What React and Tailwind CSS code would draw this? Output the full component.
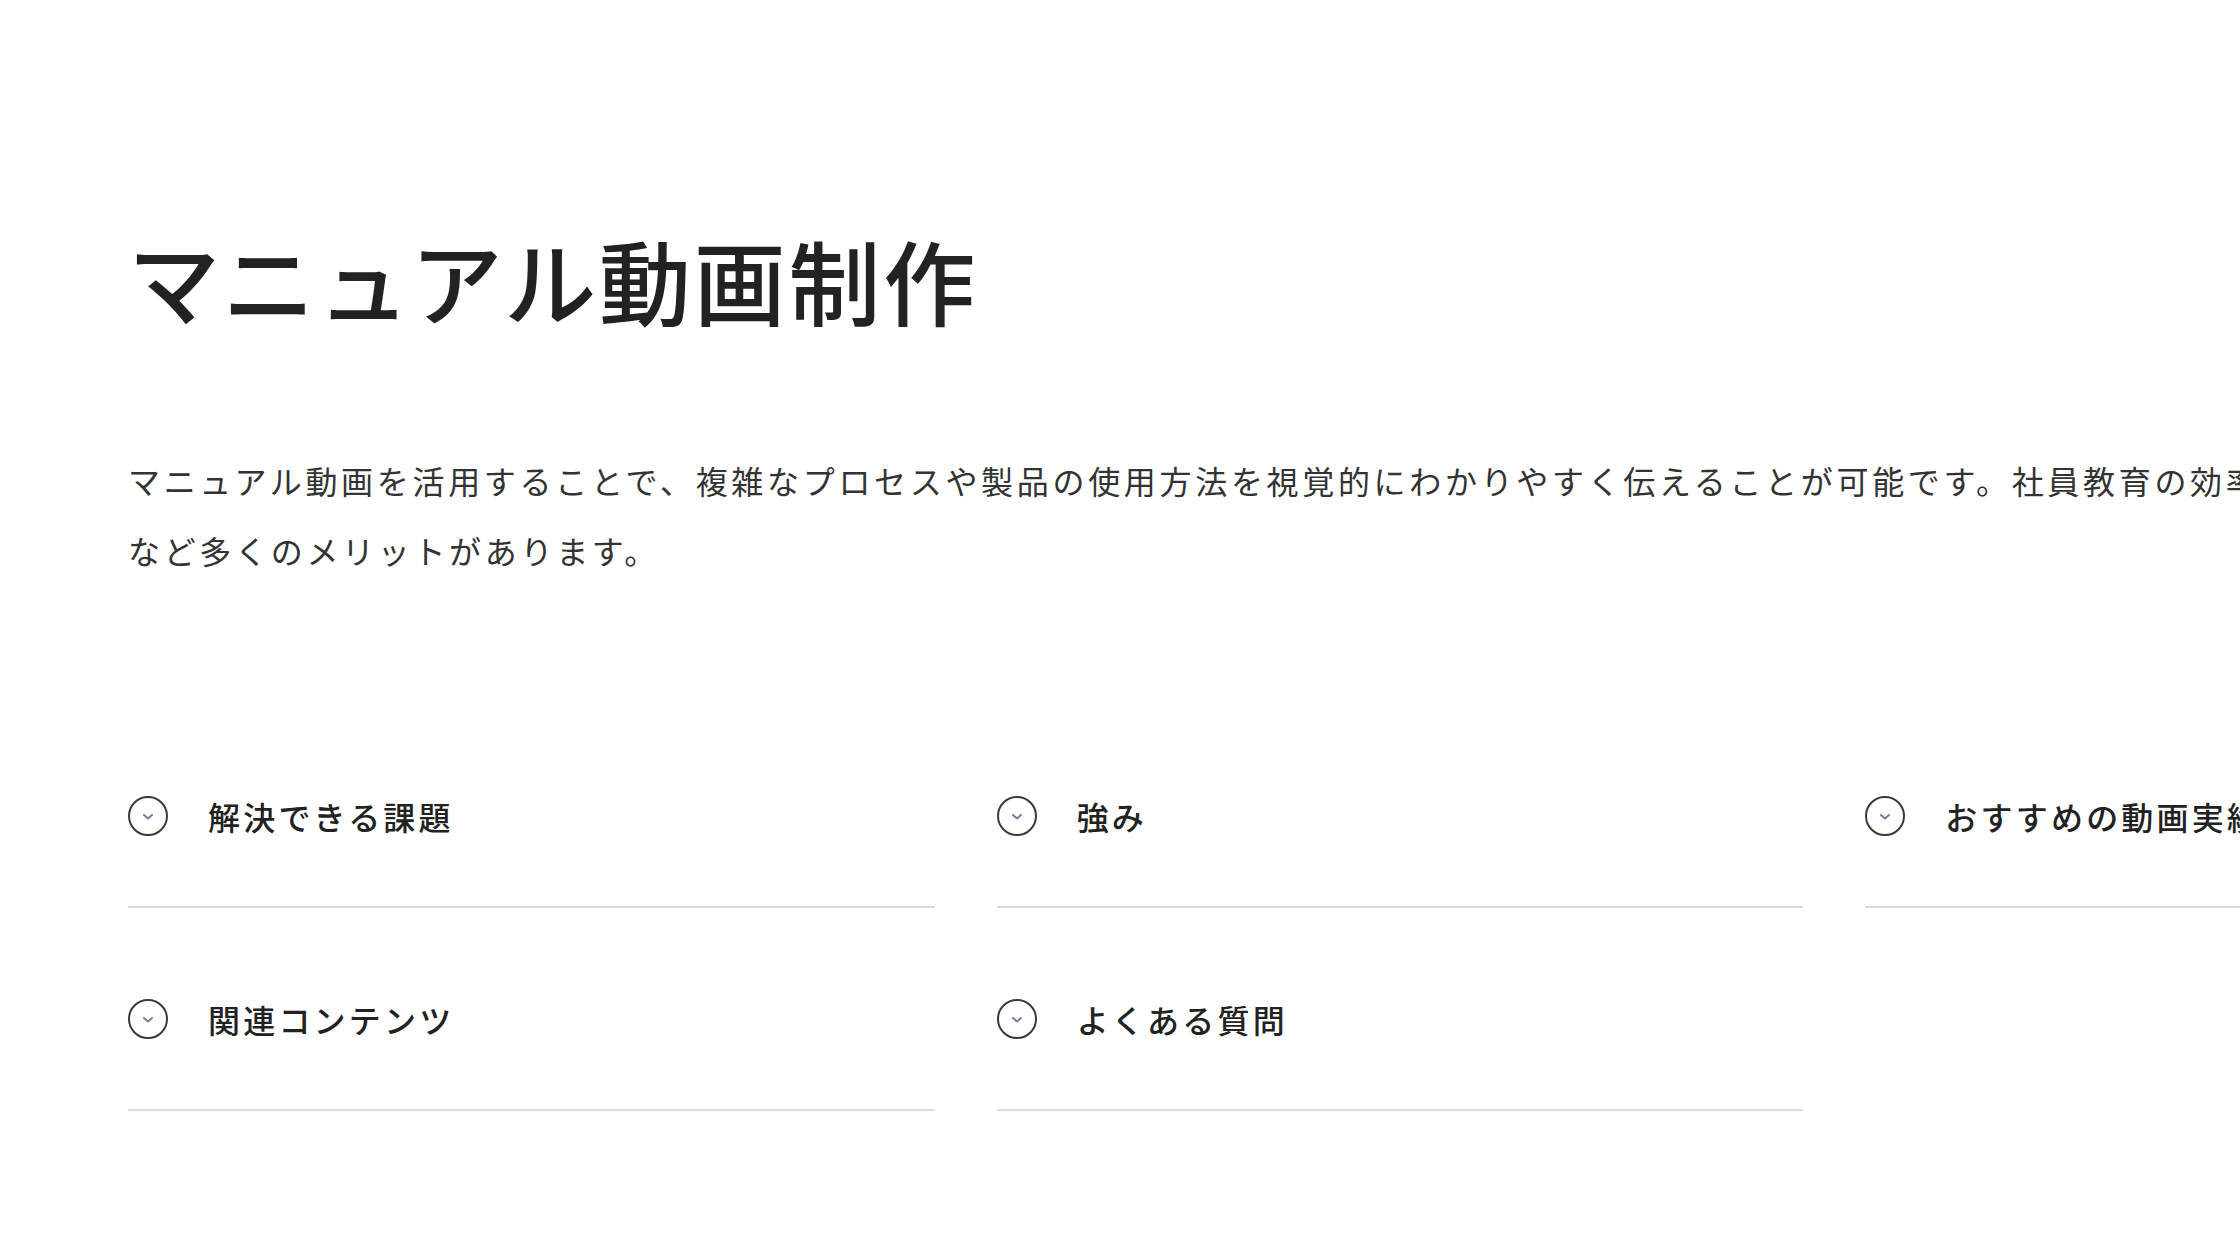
const sections = [
  '解決できる課題',
  '強み',
  'おすすめの動画実績',
  '関連コンテンツ',
  'よくある質問',
];

const ChevronCircle = () => (
  <span className="flex h-[40px] w-[40px] shrink-0 items-center justify-center rounded-full border-2 border-[#3a3a3a]">
    <svg width="12" height="8" viewBox="0 0 12 8" className="mt-[2px]">
      <path d="M2 2 L6 5.5 L10 2" fill="none" stroke="#6f7f9c" strokeWidth="2" strokeLinecap="round" strokeLinejoin="round" />
    </svg>
  </span>
);

const App = () => {
  return (
    <div className="min-h-screen w-full overflow-hidden bg-white text-[#222] [font-family:'Noto_Sans_CJK_JP','Noto_Sans',sans-serif]">
      <div className="w-[2800px] px-[128px] pt-[219px]">
        {/* Title */}
        <h1 className="text-[92px] font-medium leading-[120px] tracking-[0.03em] text-[#222]">
          マニュアル動画制作
        </h1>

        {/* Description */}
        <p className="mt-[106px] text-[32px] leading-[70px] tracking-[0.115em] text-[#333]">
          マニュアル動画を活用することで、複雑なプロセスや製品の使用方法を視覚的にわかりやすく伝えることが可能です。社員教育の効率化、業務の標準化
          <br />
          など多くのメリットがあります。
        </p>

        {/* Section links */}
        <div className="mt-[187px] grid w-[2544px] grid-cols-3 gap-x-[62px] gap-y-[67px]">
          {sections.map((label) => (
            <a
              key={label}
              href="#"
              className="flex items-center border-b-2 border-[#dcdcdc] pt-[24px] pb-[70px]"
            >
              <ChevronCircle />
              <span className="ml-[40px] text-[32px] font-medium leading-[40px] tracking-[0.1em] text-[#222]">
                {label}
              </span>
            </a>
          ))}
        </div>
      </div>
    </div>
  );
};

export default App;
